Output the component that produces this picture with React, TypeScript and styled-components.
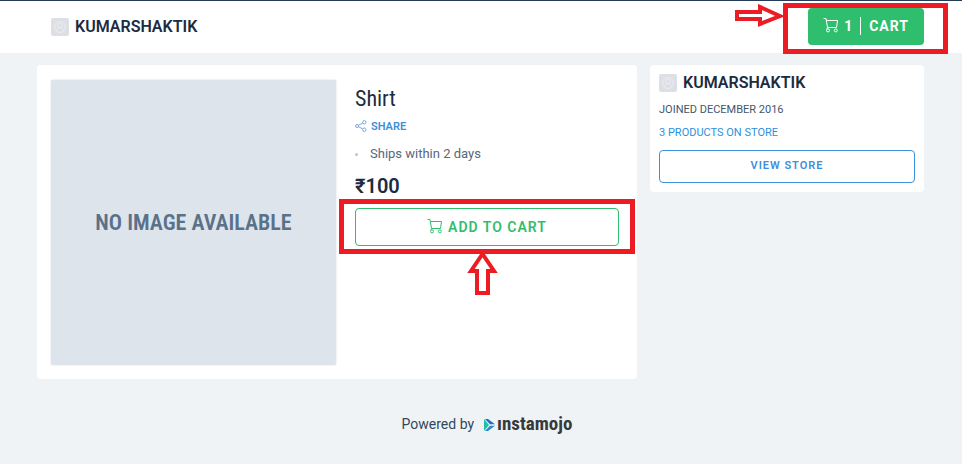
import React from "react";
import styled, { createGlobalStyle } from "styled-components";

const GlobalStyle = createGlobalStyle`
  * { box-sizing: border-box; }
  body {
    margin: 0;
    min-height: 100vh;
    background: #eff3f6;
    color: #1c2b3f;
    font-family: Roboto, "Liberation Sans", sans-serif;
  }
  h1, h2, p, ul { margin: 0; padding: 0; }
  a { text-decoration: none; }
`;

const condensed = `"Roboto Condensed", "Liberation Sans Narrow", "Liberation Sans", sans-serif`;

const Header = styled.header`
  display: flex;
  align-items: center;
  justify-content: space-between;
  height: 53px;
  padding: 0 38px 0 51px;
  background: #fff;
  border-top: 1px solid #243c5a;
`;

const StoreLink = styled.a`
  display: flex;
  align-items: center;
  gap: 6px;
  color: #1c2b3f;
  font-size: 16px;
  line-height: 18px;
  font-weight: 600;
`;

const Avatar = styled.span`
  display: flex;
  width: 18px;
  height: 18px;
  border-radius: 2px;
  background: #dcdfe4;
`;

const Marked = styled.div`
  position: relative;
  display: flex;
`;

const HeaderMarked = styled(Marked)`
  margin-bottom: 2px;
`;

const Frame = styled.span<{ $inset: string }>`
  position: absolute;
  inset: ${(p) => p.$inset};
  border: 5px solid #ed1c24;
  pointer-events: none;
`;

const RightArrow = styled.svg`
  position: absolute;
  right: 141px;
  top: -4px;
  width: 48px;
  height: 24px;
  pointer-events: none;
`;

const UpArrow = styled.svg`
  position: absolute;
  left: 112px;
  top: 42px;
  width: 31px;
  height: 46px;
  pointer-events: none;
`;

const CartButton = styled.button`
  display: flex;
  align-items: center;
  height: 37px;
  padding: 0 15px;
  border: 0;
  border-radius: 4px;
  background: #2fbe6e;
  color: #fff;
  font: 700 14px/18px Roboto, sans-serif;
  letter-spacing: 1px;

  svg { margin-bottom: 2px; }
`;

const Count = styled.span`
  margin-left: 5px;
  padding-right: 7px;
  border-right: 1px solid #fff;
`;

const CartLabel = styled.span`
  margin-left: 8px;
`;

const Main = styled.main`
  display: flex;
  align-items: flex-start;
  gap: 13px;
  padding: 12px 38px 0 37px;
`;

const Product = styled.section`
  flex: 1;
  display: grid;
  grid-template-columns: 285px 1fr;
  gap: 19px;
  padding: 15px 18px 14px 14px;
  border-radius: 4px;
  background: #fff;
`;

const Placeholder = styled.div`
  display: flex;
  align-items: center;
  justify-content: center;
  aspect-ratio: 1;
  border-radius: 2px;
  background: #dde4eb;
  box-shadow: 0 0 2px #ccd3da;
  color: #597189;
  font: 600 22px/26px ${condensed};
`;

const Title = styled.h1`
  margin-top: 5px;
  color: #1c2b3f;
  font: 400 22px/28px ${condensed};
`;

const Share = styled.a`
  display: flex;
  align-items: center;
  gap: 4px;
  margin-top: 7px;
  color: #3e8edb;
  font-size: 11px;
  line-height: 14px;
  font-weight: 600;

  svg { margin-bottom: 2px; }
`;

const Notes = styled.ul`
  list-style: none;
  margin-top: 11px;
`;

const Note = styled.li`
  display: flex;
  align-items: center;
  gap: 12px;
  color: #56687b;
  font-size: 13px;
  line-height: 18px;

  &::before {
    content: "";
    width: 3px;
    height: 3px;
    border-radius: 50%;
    background: #b9c6d3;
  }
`;

const Price = styled.p`
  margin: 11px 0 10px;
  font-size: 20px;
  line-height: 24px;
  font-weight: 600;
`;

const AddButton = styled.button`
  display: flex;
  align-items: center;
  justify-content: center;
  gap: 5px;
  width: 100%;
  height: 38px;
  padding: 0;
  border: 1px solid #2fbe6e;
  border-radius: 4px;
  background: #fff;
  color: #2fbe6e;
  font: 600 14px/18px Roboto, sans-serif;
  letter-spacing: 1px;

  svg { margin-bottom: 2px; }
`;

const Seller = styled.aside`
  display: flex;
  flex-direction: column;
  width: 274px;
  padding: 9px;
  border-radius: 4px;
  background: #fff;
`;

const Joined = styled.p`
  margin-top: 11px;
  color: #43576b;
  font-size: 11px;
  line-height: 14px;
`;

const ProductsLink = styled.a`
  margin-top: 9px;
  color: #2e8fe0;
  font-size: 11px;
  line-height: 14px;
`;

const ViewStore = styled.a`
  margin-top: 10px;
  padding: 7px 0 9px;
  border: 1px solid #3d94dc;
  border-radius: 4px;
  color: #3e8edb;
  font-size: 11px;
  line-height: 15px;
  font-weight: 600;
  letter-spacing: 1px;
  text-align: center;
`;

const Footer = styled.footer`
  display: flex;
  align-items: center;
  justify-content: center;
  gap: 10px;
  margin-top: 34px;
  padding-left: 12px;
  color: #33475b;
  font-size: 14px;
  line-height: 22px;
`;

const Brand = styled.a`
  display: flex;
  align-items: center;
  gap: 1px;
  color: #363a3d;
  font: 700 19px/22px ${condensed};

  svg { margin-top: 2px; }
`;

function CartIcon() {
  return (
    <svg width="16" height="16" viewBox="0 0 16 16" fill="none" stroke="currentColor" strokeWidth="1" aria-hidden="true">
      <path d="M0.5 1.5H3L4.5 10.5H13.5M3.2 3.5H14.5L13.5 10.5M4.5 10.5L3.8 12" strokeLinejoin="round" />
      <circle cx="5" cy="13.4" r="1.5" />
      <circle cx="12.8" cy="13.4" r="1.5" />
    </svg>
  );
}

function StoreName() {
  return (
    <StoreLink href="#store">
      <Avatar>
        <svg width="18" height="18" viewBox="0 0 18 18" fill="none" stroke="#eceef1" aria-hidden="true">
          <circle cx="9" cy="9" r="5.5" />
          <circle cx="9" cy="7.5" r="2.2" />
          <path d="M5.5 13C6 11 7.5 10.5 7.8 9.5M12.5 13C12 11 10.5 10.5 10.2 9.5" />
        </svg>
      </Avatar>
      KUMARSHAKTIK
    </StoreLink>
  );
}

export default function App() {
  return (
    <>
      <GlobalStyle />
      <Header>
        <StoreName />
        <HeaderMarked>
          <CartButton>
            <CartIcon />
            <Count>1</Count>
            <CartLabel>CART</CartLabel>
          </CartButton>
          <Frame $inset="-5px -24px -9px -25px" />
          <RightArrow viewBox="0 0 48 24" fill="#fff" stroke="#ed1c24" strokeWidth="4" aria-hidden="true">
            <path d="M2 8H25V3L45 12L25 20V15H2Z" />
          </RightArrow>
        </HeaderMarked>
      </Header>
      <Main>
        <Product>
          <Placeholder>NO IMAGE AVAILABLE</Placeholder>
          <div>
            <Title>Shirt</Title>
            <Share href="#share">
              <svg width="12" height="12" viewBox="0 0 12 12" fill="none" stroke="#7ba7dd" aria-hidden="true">
                <circle cx="2" cy="6" r="1.5" />
                <circle cx="9.3" cy="2.3" r="1.7" />
                <circle cx="9.3" cy="9.7" r="1.7" />
                <path d="M3.4 5.3L7.7 3.1M3.4 6.7L7.7 8.9" />
              </svg>
              SHARE
            </Share>
            <Notes>
              <Note>Ships within 2 days</Note>
            </Notes>
            <Price>₹100</Price>
            <Marked>
              <AddButton>
                <CartIcon />
                ADD TO CART
              </AddButton>
              <Frame $inset="-9px -16px -8px -16px" />
              <UpArrow viewBox="0 0 31 46" fill="#fff" stroke="#ed1c24" strokeWidth="4" aria-hidden="true">
                <path d="M15.5 4L27 21H21V43H10V21H4Z" />
              </UpArrow>
            </Marked>
          </div>
        </Product>
        <Seller>
          <StoreName />
          <Joined>JOINED DECEMBER 2016</Joined>
          <ProductsLink href="#products">3 PRODUCTS ON STORE</ProductsLink>
          <ViewStore href="#store">VIEW STORE</ViewStore>
        </Seller>
      </Main>
      <Footer>
        Powered by
        <Brand href="#instamojo">
          <svg width="12" height="12" viewBox="0 0 12 12" aria-hidden="true">
            <path d="M0 0L5 6L0 12Z" fill="#20bfa9" />
            <path d="M1 0H4L11 5.3H6Z" fill="#1f6fc0" />
            <path d="M1 12H4L11 6.7H6Z" fill="#2a86d1" />
          </svg>
          ınstamojo
        </Brand>
      </Footer>
    </>
  );
}
